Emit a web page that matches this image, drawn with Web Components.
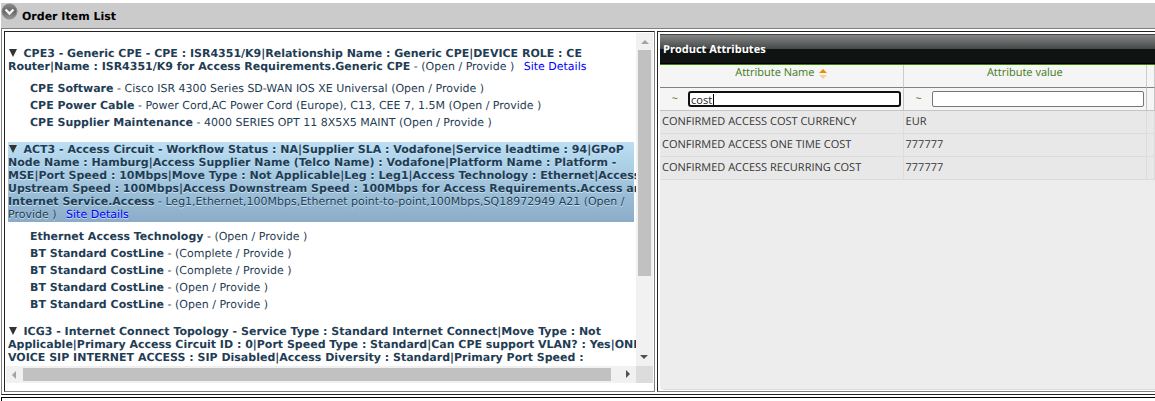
<!DOCTYPE html>
<html lang="en">
<head>
<meta charset="utf-8">
<title>Order Item List</title>
<style>
html, body { margin: 0; height: 100%; background: #fff; overflow: hidden; }
body { font: 11px/13px Verdana, "DejaVu Sans", sans-serif; color: #1f3d54; text-rendering: geometricPrecision; }
</style>
</head>
<body>
<order-page>
  <order-header slot="header">Order Item List</order-header>
  <scroll-pane slot="items">
    <order-item>
      <b>CPE3 - Generic CPE - CPE : ISR4351/K9|Relationship Name : Generic CPE|DEVICE ROLE : CE<br>Router|Name : ISR4351/K9 for Access Requirements.Generic CPE</b>
      <span slot="tail">- (Open / Provide )</span>
      <order-child slot="children" name="CPE Software">Cisco ISR 4300 Series SD-WAN IOS XE Universal (Open / Provide )</order-child>
      <order-child slot="children" name="CPE Power Cable">Power Cord,AC Power Cord (Europe), C13, CEE 7, 1.5M (Open / Provide )</order-child>
      <order-child slot="children" name="CPE Supplier Maintenance">4000 SERIES OPT 11 8X5X5 MAINT (Open / Provide )</order-child>
    </order-item>
    <order-item selected>
      <b>ACT3 - Access Circuit - Workflow Status : NA|Supplier SLA : Vodafone|Service leadtime : 94|GPoP<br>Node Name : Hamburg|Access Supplier Name (Telco Name) : Vodafone|Platform Name : Platform -<br>MSE|Port Speed : 10Mbps|Move Type : Not Applicable|Leg : Leg1|Access Technology : Ethernet|Access<br>Upstream Speed : 100Mbps|Access Downstream Speed : 100Mbps for Access Requirements.Access and<br>Internet Service.Access</b>
      <span slot="tail">- Leg1,Ethernet,100Mbps,Ethernet point-to-point,100Mbps,SQ18972949 A21 (Open /<br>Provide )</span>
      <order-child slot="children" name="Ethernet Access Technology">(Open / Provide )</order-child>
      <order-child slot="children" name="BT Standard CostLine">(Complete / Provide )</order-child>
      <order-child slot="children" name="BT Standard CostLine">(Complete / Provide )</order-child>
      <order-child slot="children" name="BT Standard CostLine">(Open / Provide )</order-child>
      <order-child slot="children" name="BT Standard CostLine">(Open / Provide )</order-child>
    </order-item>
    <order-item nolink>
      <b>ICG3 - Internet Connect Topology - Service Type : Standard Internet Connect|Move Type : Not<br>Applicable|Primary Access Circuit ID : 0|Port Speed Type : Standard|Can CPE support VLAN? : Yes|ONE<br>VOICE SIP INTERNET ACCESS : SIP Disabled|Access Diversity : Standard|Primary Port Speed :</b>
    </order-item>
  </scroll-pane>
  <attribute-grid slot="attributes"></attribute-grid>
</order-page>

<script>
class Base extends HTMLElement {
  connectedCallback() {
    if (this.shadowRoot) return;
    this.attachShadow({ mode: 'open' }).innerHTML = this.view();
  }
}

customElements.define('order-page', class extends Base {
  view() {
    return `<style>
      :host { display: grid; grid-template-rows: auto minmax(0, 1fr) auto; height: 100vh; box-sizing: border-box; padding: 3px 0 0 1px; }
      main { display: grid; grid-template-columns: 651fr 498fr; column-gap: 2px; min-height: 0;
        border: solid #808080; border-width: 1px 0 1px 1px; border-bottom-color: #222; padding: 2px 0 2px 2px; }
      .cell { display: grid; min-width: 0; min-height: 0; border: 1px solid #808080; border-top-color: #222; border-left-color: #222; }
      .left { padding: 1px 1px 8px; }
      .right { border-right: 0; padding: 1px 0 1px 2px; }
      footer { height: 3px; margin-top: 2px; border: 1px solid #000; border-width: 1px 0 0 1px; }
    </style>
    <slot name="header"></slot>
    <main><section class="cell left"><slot name="items"></slot></section>
    <section class="cell right"><slot name="attributes"></slot></section></main>
    <footer></footer>`;
  }
});

customElements.define('order-header', class extends Base {
  view() {
    return `<style>
      :host { display: flex; align-items: center; height: 25px; background: #cbcbcb; color: #000; }
      button { all: unset; width: 17px; height: 17px; align-self: flex-start; margin-right: 4px; }
      svg { display: block; }
      h1 { margin: 1px 0 0; font: bold 11px/13px Verdana, "DejaVu Sans", sans-serif; }
    </style>
    <button aria-label="Collapse"><svg width="17" height="17" viewBox="0 0 17 17">
      <defs><linearGradient id="g" x1="0" y1="0" x2="0" y2="1"><stop offset="0" stop-color="#8a8a8a"/><stop offset=".5" stop-color="#666"/><stop offset="1" stop-color="#9a9a9a"/></linearGradient></defs>
      <circle cx="8.5" cy="8.5" r="7.5" fill="url(#g)" stroke="#8a8a8a"/>
      <path d="M4.5 6.5l4 4 4-4" fill="none" stroke="#f4f4f4" stroke-width="2.4"/></svg></button>
    <h1><slot></slot></h1>`;
  }
});

customElements.define('scroll-pane', class extends Base {
  view() {
    return `<style>
      :host { display: grid; grid-template: minmax(0, 1fr) 17px / minmax(0, 1fr) 17px; min-height: 0; }
      .view { overflow: hidden; padding: 13px 2px 0; }
      .bar { display: flex; align-items: center; background: #f1f1f1; }
      .v { flex-direction: column; }
      .btn { flex: 0 0 17px; display: block; width: 17px; height: 17px; }
      .track { flex: 1; display: flex; min-height: 0; }
      .v .track { flex-direction: column; width: 13px; }
      .h .track { height: 13px; }
      .thumb { background: #c1c1c1; }
      .v .thumb { flex: 0 0 75.5%; }
      .h .thumb { flex: 0 0 98.6%; }
      .corner { background: #dcdcdc; }
    </style>
    <div class="view"><slot></slot></div>
    <div class="bar v"><svg class="btn"><path d="M5 11h8L9 7z" fill="#a3a3a3"/></svg><div class="track"><div class="thumb"></div></div><svg class="btn"><path d="M4 6h8l-4 4z" fill="#505050"/></svg></div>
    <div class="bar h"><svg class="btn"><path d="M10 5v8L6 9z" fill="#a3a3a3"/></svg><div class="track"><div class="thumb"></div></div><svg class="btn"><path d="M7 4v8l4-4z" fill="#505050"/></svg></div>
    <div class="corner"></div>`;
  }
});

customElements.define('order-item', class extends Base {
  view() {
    return `<style>
      :host { display: block; margin-bottom: 11px; white-space: nowrap; }
      .label { padding: 1px 0; }
      :host([selected]) .label { background: linear-gradient(#bbdff4, #8aacc8); text-shadow: 0 1px 0 #d0e6f4; }
      .mark { display: inline-block; width: 9px; height: 8px; margin-right: 3px; fill: #333; }
      a { color: #00f; text-decoration: none; margin-left: 6px; }
      .children { margin: 6px 0 0 22px; }
    </style>
    <div class="label"><svg class="mark"><path d="M1 0h8L5 8z"/></svg> <slot></slot>${this.hasAttribute('nolink') ? '' : ' <span class="tail"><slot name="tail"></slot></span> <a href="#">Site Details</a>'}</div>
    <div class="children"><slot name="children"></slot></div>`;
  }
});

customElements.define('order-child', class extends Base {
  view() {
    return `<style>:host { display: block; line-height: 17px; }</style>
    <b>${this.getAttribute('name')}</b> - <slot></slot>`;
  }
});

customElements.define('attribute-grid', class extends Base {
  view() {
    const rows = [['CONFIRMED ACCESS COST CURRENCY', 'EUR'], ['CONFIRMED ACCESS ONE TIME COST', '777777'], ['CONFIRMED ACCESS RECURRING COST', '777777']];
    return `<style>
      :host { display: block; min-width: 0; overflow: hidden; margin-top: 1px; background: #ededed; border: 1px solid #dcdcdc; border-width: 0 0 1px; border-radius: 0 0 0 5px;
        font: 11px/14px "Trebuchet MS", "Open Sans", sans-serif; color: #333; }
      h2 { margin: 0; box-sizing: border-box; height: 31px; padding: 8px 3px 0; border-top: 1px solid #444; border-bottom: 1px solid #3a8000;
        font-size: 11px; line-height: 14px; color: #fff; background: linear-gradient(#838585, #454848 14px, #0f1413 14px, #0f1413 28px, #000 28px); }
      table { width: 100%; table-layout: fixed; border-collapse: separate; border-spacing: 0; }
      .c { width: 49.2%; }
      th, td { box-sizing: border-box; padding: 0 2px; height: 23px; border: 0 solid #dcdcdc; border-width: 0 1px 1px 0; white-space: nowrap; text-align: left; }
      td { background: #e8e8e8; }
      .head th { background: #f5f5f5; color: #3f7a18; font-weight: 500; text-align: center; padding-bottom: 6px; border-color: #808080; border-right-color: #ccc; }
      .filter td { background: #f5f5f5; border-color: #c4c4c4; }
      .f { display: flex; align-items: center; color: #3f7a18; position: relative; }
      .f label { flex: 0 0 26px; text-align: center; }
      input { flex: 1; min-width: 0; height: 16px; box-sizing: border-box; margin: 0; border: 1px solid #767676; border-radius: 2px; padding: 0 2px; font: 11px/12px "Trebuchet MS", "Open Sans", sans-serif; color: #222; outline: 0; }
      input.on { border: 2px solid #101010; border-radius: 3px; padding: 0 1px; }
      .caret { position: absolute; left: 51px; top: 3px; width: 1px; height: 11px; background: #000; }
      .sort { width: 8px; height: 10px; margin-left: 2px; vertical-align: -3px; }
    </style>
    <h2>Product Attributes</h2>
    <table><colgroup><col class="c"><col class="c"><col></colgroup>
      <thead>
        <tr class="head"><th>Attribute Name <svg class="sort"><path d="M0 4l4-4 4 4z" fill="#f08c00"/><path d="M0 6h8l-4 4z" fill="#f8cf9c"/></svg></th><th>Attribute value</th><th></th></tr>
        <tr class="filter"><td><div class="f"><label for="n">~</label><input id="n" class="on" value="cost"><i class="caret"></i></div></td><td><div class="f"><label for="v">~</label><input id="v"></div></td><td></td></tr>
      </thead>
      <tbody>${rows.map(r => `<tr><td>${r[0]}</td><td>${r[1]}</td><td></td></tr>`).join('')}</tbody>
    </table>`;
  }
});
</script>
</body>
</html>
